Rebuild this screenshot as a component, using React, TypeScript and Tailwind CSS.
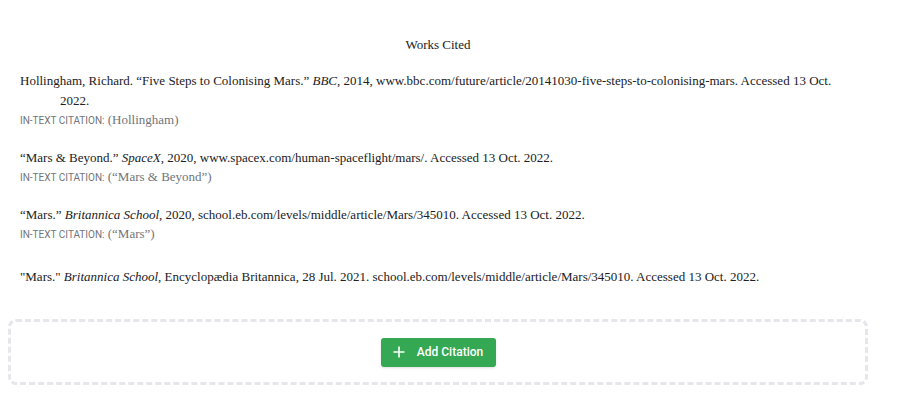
import React from 'react';

const serif = "[font-family:'Liberation_Serif','Times_New_Roman',serif]";

type Entry = {
  parts: React.ReactNode;
  inText?: string;
};

const entries: Entry[] = [
  {
    parts: (
      <>
        Hollingham, Richard. “Five Steps to Colonising Mars.” <i>BBC</i>, 2014,
        www.bbc.com/future/article/20141030-five-steps-to-colonising-mars. Accessed 13 Oct. 2022.
      </>
    ),
    inText: '(Hollingham)',
  },
  {
    parts: (
      <>
        “Mars &amp; Beyond.” <i>SpaceX</i>, 2020, www.spacex.com/human-spaceflight/mars/. Accessed 13 Oct. 2022.
      </>
    ),
    inText: '(“Mars & Beyond”)',
  },
  {
    parts: (
      <>
        “Mars.” <i>Britannica School</i>, 2020, school.eb.com/levels/middle/article/Mars/345010. Accessed 13 Oct. 2022.
      </>
    ),
    inText: '(“Mars”)',
  },
];

const PlusIcon = () => (
  <svg width="12" height="12" viewBox="0 0 12 12" fill="none">
    <path d="M6 0.5v11M0.5 6h11" stroke="white" strokeWidth="1.6" />
  </svg>
);

export default function App() {
  return (
    <div className="min-h-[409px] bg-white">
      <div className="ml-2 w-[860px]">
        {/* bibliography */}
        <div className={`px-3 text-[13px] leading-5 text-[#202124] ${serif}`}>
          <h2 className="pt-[35px] text-center">Works Cited</h2>

          <div className="mt-4">
            {entries.map((entry, index) => (
              <div key={index} className="mb-[18px]">
                <p className="pl-10 -indent-10">{entry.parts}</p>
                {entry.inText && (
                  <div className="leading-[18px]">
                    <span className="[font-family:'Roboto','Liberation_Sans',sans-serif] text-[10px] uppercase text-[#70757a]">
                      In-text citation:
                    </span>{' '}
                    <span className="text-[13px] text-[#70757a]">{entry.inText}</span>
                  </div>
                )}
              </div>
            ))}

            <p className="mt-[23px] pl-10 -indent-10">
              "Mars." <i>Britannica School</i>, Encyclopædia Britannica, 28 Jul. 2021.
              school.eb.com/levels/middle/article/Mars/345010. Accessed 13 Oct. 2022.
            </p>
          </div>
        </div>

        {/* add citation */}
        <div className="mt-[32px] flex h-[66px] items-center justify-center rounded-lg border-[3px] border-dashed border-[#e5e7eb]">
          <button className="flex h-[29px] w-[115px] items-center justify-center gap-3 rounded-[3px] bg-[#34a853] [font-family:'Roboto','Liberation_Sans',sans-serif] text-[12px] font-medium text-white shadow-sm">
            <PlusIcon />
            Add Citation
          </button>
        </div>
      </div>
    </div>
  );
}
